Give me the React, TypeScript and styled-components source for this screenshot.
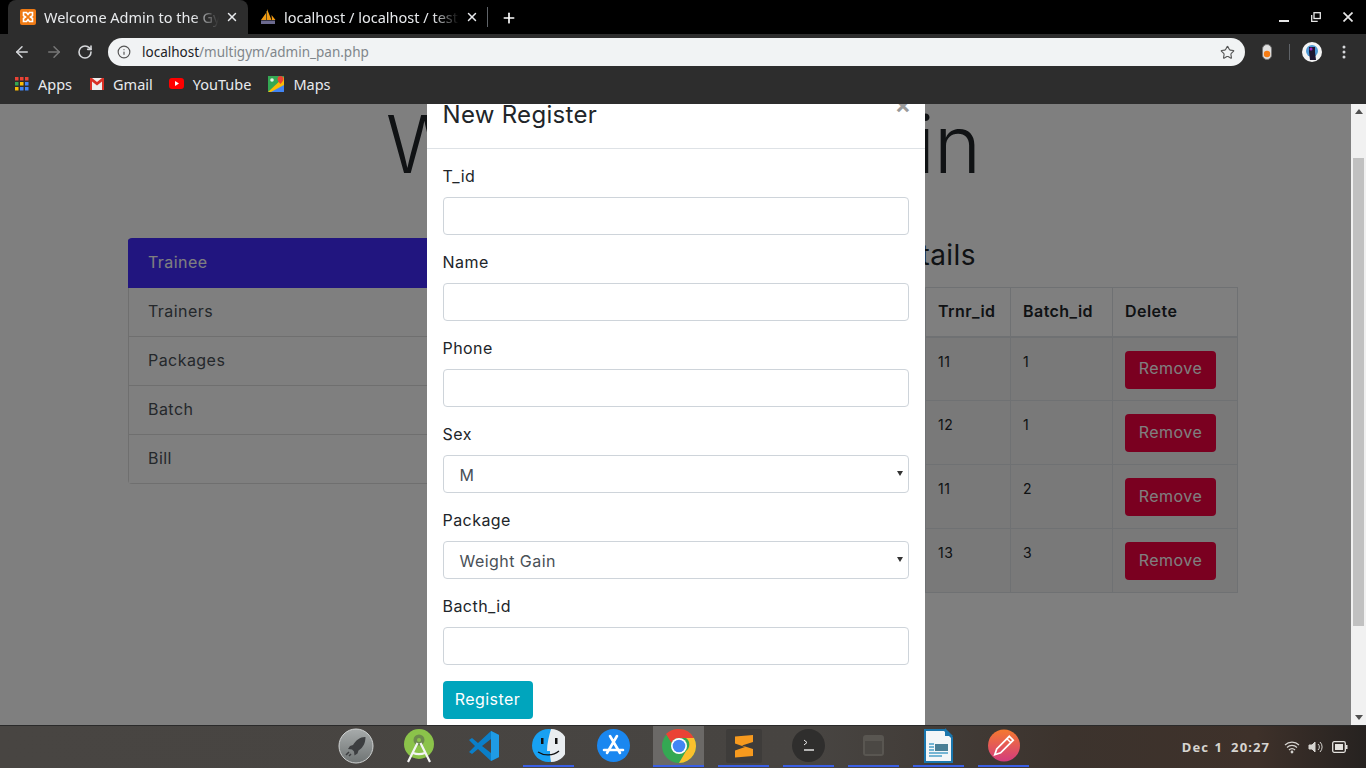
import React from "react";
import styled, { createGlobalStyle } from "styled-components";
import { ArrowLeft, ArrowRight, RotateCw, Info, Star, X, Plus } from "lucide-react";

const Global = createGlobalStyle`
  html, body { margin: 0; padding: 0; height: 100%; overflow: hidden; }
  * { box-sizing: border-box; }
`;
const BODY = `"Inter", "Noto Sans", sans-serif`;
const UI = `"Noto Sans", "Open Sans", sans-serif`;

const Screen = styled.div`display:flex;flex-direction:column;width:1366px;height:768px;overflow:hidden;background:#fff;`;
const TabBar = styled.div`display:flex;align-items:flex-end;height:34px;background:#000;padding-left:8px;flex:none;`;
const Tab = styled.div<{ $active?: boolean }>`
  display:flex;align-items:center;width:240px;height:34px;padding:0 0 0 12px;
  background:${p => p.$active ? "#2d2d2d" : "transparent"};border-radius:8px 8px 0 0;color:#e8eaed;font:14.5px ${UI};white-space:nowrap;
`;
const TabTitle = styled.span`width:175px;margin-left:8px;overflow:hidden;
  -webkit-mask-image:linear-gradient(90deg,#000 85%,transparent);mask-image:linear-gradient(90deg,#000 85%,transparent);`;
const TabClose = styled.span`display:flex;margin-left:6px;color:#e8eaed;`;
const TabDivider = styled.i`display:block;width:1px;height:20px;background:#5f6368;margin:0 0 7px -1px;`;
const NewTab = styled.span`display:flex;margin:0 0 8px 13px;color:#fff;`;
const WinControls = styled.div`display:flex;align-items:flex-start;gap:22px;margin-left:auto;height:34px;padding:12px 13px 0 0;color:#e6e6e6;`;

const ToolBar = styled.div`display:flex;align-items:center;height:36px;background:#2d2d2d;flex:none;padding:0 0 0 13px;`;
const NavBtn = styled.span<{ $off?: boolean }>`display:flex;margin-right:14px;color:${p => p.$off ? "#777" : "#d5d7da"};`;
const Omni = styled.div`display:flex;align-items:center;width:1137px;height:28px;margin-left:1px;padding:0 10px 0 9px;border-radius:14px;background:#f1f3f4;font:13.5px ${UI};color:#80868b;`;
const Host = styled.span`color:#202124;margin-left:11px;`;
const OmniStar = styled.span`display:flex;margin-left:auto;color:#555;`;
const Ext = styled.span`display:flex;margin-left:17px;`;
const TbDivider = styled.i`display:block;width:1px;height:16px;background:#5f6368;margin-left:17px;`;
const Avatar = styled.span`display:flex;margin-left:12px;`;
const Dots = styled.span`display:flex;margin-left:20px;`;

const Bookmarks = styled.div`display:flex;align-items:center;height:34px;background:#2d2d2d;flex:none;padding:0 0 7px 15px;font:14.5px ${UI};color:#e8eaed;`;
const Bookmark = styled.span<{ $gap: number }>`display:flex;align-items:center;gap:9px;margin-right:${p => p.$gap}px;`;

const Viewport = styled.div`position:relative;flex:1;min-height:0;overflow:hidden;background:#fff;display:flex;`;
const Page = styled.main`flex:1;min-width:0;padding:0 128px;color:#212529;font-family:${BODY};letter-spacing:.45px;`;
const Title = styled.h1`margin:0;height:134px;padding-top:0;text-align:center;font:300 80px/80px ${BODY};letter-spacing:-.9px;white-space:nowrap;color:#212529;`;
const Columns = styled.div`display:flex;`;
const Side = styled.ul`list-style:none;margin:0;padding:0;width:320px;flex:none;border-radius:4px;align-self:flex-start;overflow:hidden;`;
const SideItem = styled.li<{ $active?: boolean }>`
  height:${p => p.$active ? 50 : 49}px;padding:0 19px ${p => p.$active ? 2 : 2}px;display:flex;align-items:center;font-size:16px;
  background:${p => p.$active ? "#422bff" : "transparent"};color:${p => p.$active ? "#fff" : "#495057"};
  border:1px solid ${p => p.$active ? "#422bff" : "rgba(0,0,0,.125)"};border-top:0;
`;
const Main = styled.section`flex:1;min-width:0;margin-left:30px;`;
const Heading = styled.h2`margin:0 0 15px;height:34px;font:400 28px/34px ${BODY};white-space:nowrap;text-align:right;padding-right:262px;`;
const Table = styled.table`width:100%;border-collapse:collapse;font-size:14px;table-layout:fixed;`;
const Th = styled.th<{ $w?: number }>`border:1px solid #dee2e6;border-bottom-width:2px;height:49px;padding:0 12px 2px;text-align:left;font-size:16px;font-weight:600;width:${p => p.$w ? p.$w + "px" : "auto"};`;
const Td = styled.td`border:1px solid #dee2e6;height:64px;padding:15px 12px 0;vertical-align:top;`;
const Striped = styled.tr`background:rgba(0,0,0,.05);`;
const Danger = styled.span`display:flex;align-items:center;justify-content:center;width:91px;height:38px;margin-top:-2px;padding-bottom:3px;background:#f40040;color:#fff;border-radius:4px;font-size:16px;`;

const Bar = styled.div`position:absolute;top:0;right:0;bottom:0;width:15px;background:#f1f1f1;z-index:3;display:flex;flex-direction:column;align-items:center;`;
const Arrow = styled.span`flex:none;height:15px;display:flex;align-items:center;justify-content:center;color:#505050;`;
const Thumb = styled.span`display:block;width:11px;height:468px;background:#c1c1c1;margin-top:39px;`;
const BarFill = styled.span`flex:1;`;

const Overlay = styled.div`position:absolute;inset:0 15px 0 0;background:rgba(0,0,0,.5);z-index:2;display:flex;justify-content:center;`;
const Modal = styled.div`flex:none;width:498px;height:700px;margin-top:-28px;background:#fff;color:#212529;font-family:${BODY};letter-spacing:.45px;`;
const ModalHead = styled.div`position:relative;display:flex;align-items:flex-end;height:73px;padding:0 16px 15px;border-bottom:1px solid #dee2e6;`;
const ModalTitle = styled.h5`margin:0;font:400 24px/36px ${BODY};letter-spacing:.3px;`;
const CloseX = styled.span`position:absolute;right:13px;top:17px;font:700 24px/24px ${BODY};color:#9a9a9a;`;
const Form = styled.div`padding:16px 16px 0;`;
const Field = styled.div`height:86px;`;
const Label = styled.label`display:block;height:32px;font-size:16px;line-height:22px;`;
const Input = styled.div`height:38px;border:1px solid #ced4da;border-radius:4px;background:#fff;`;
const Select = styled(Input)`position:relative;padding:2px 16px 0;display:flex;align-items:center;font-size:16px;color:#495057;`;
const Caret = styled.span`position:absolute;right:5px;top:15px;width:0;height:0;border-left:3px solid transparent;border-right:3px solid transparent;border-top:5px solid #333;`;
const Submit = styled.span`display:inline-flex;align-items:center;justify-content:center;width:90px;height:38px;padding-bottom:2px;border-radius:4px;background:#00a5bd;color:#fff;font-size:16px;`;

const Dock = styled.footer`display:flex;align-items:flex-start;height:43px;flex:none;padding-left:328px;border-top:1px solid #2a2a2a;
  background:linear-gradient(90deg,#484542 0,#474441 60%,#3c332d 78%,#3e312a 92%,#262220 100%);`;
const DockItem = styled.span<{ $on?: boolean; $active?: boolean; $shift?: number }>`display:flex;align-items:center;justify-content:center;width:51px;height:41px;margin-right:14px;flex:none;
  padding-left:${p => p.$shift || 0}px;
  background:${p => p.$active ? "#6b6967" : "transparent"};
  border-bottom:2px solid ${p => p.$on ? "#3a5fe5" : "transparent"};
`;
const Clock = styled.div`display:flex;gap:8px;align-self:center;margin-left:auto;font:700 13px ${UI};color:#d6d4d0;letter-spacing:1.1px;word-spacing:1px;white-space:nowrap;`;
const Tray = styled.div`display:flex;align-items:center;align-self:center;gap:8px;margin:0 18px 0 14px;`;

const Xampp = () => (<svg width="16" height="16" viewBox="0 0 16 16"><rect width="16" height="16" rx="2" fill="#ef7a14"/><path d="M3.500 3.500h3L8 5.500l1.500-2h3v3L10.500 8l2 1.500v3h-3L8 10.500l-1.500 2h-3v-3L5.500 8l-2-1.500z" fill="none" stroke="#fff" strokeWidth="1.600"/></svg>);
const Pma = () => (<svg width="16" height="16" viewBox="0 0 16 16"><path d="M1 11 6 4v7zM7 11V0l4.500 11zM12 11l-.5-5 4 5z" fill="#f29b12"/><path d="M6.500 2v9" stroke="#5b4a1e"/><rect x="1" y="11.500" width="14" height="3.500" fill="#6c6a8f"/></svg>);
const Apps = () => (<svg width="14" height="14" viewBox="0 0 14 14">{[0,5,10].flatMap(y=>[0,5,10].map(x=><rect key={x+"-"+y} x={x} y={y} width="3.500" height="3.500" fill={x===0?(y===0?"#ea4335":y===5?"#34a853":"#fbbc05"):x===5?(y===0?"#ea4335":y===5?"#fbbc05":"#4285f4"):(y===0?"#ea4335":"#4285f4")}/>))}</svg>);
const Gmail = () => (<svg width="14" height="12" viewBox="0 0 14 12"><rect width="14" height="12" fill="#eee"/><path d="M0 0h2l5 4 5-4h2v12h-2V3.500L7 7.500 2 3.500V12H0z" fill="#d93025"/></svg>);
const Yt = () => (<svg width="15" height="11" viewBox="0 0 15 11"><rect width="15" height="11" rx="3" fill="#f00"/><path d="m6 3 4 2.500L6 8z" fill="#fff"/></svg>);
const Maps = () => (<svg width="16" height="16" viewBox="0 0 16 16"><rect width="16" height="16" fill="#34a853"/><path d="M0 16 16 1v15z" fill="#fbbc05"/><path d="M3 16 16 9v7z" fill="#4285f4"/><circle cx="4" cy="4" r="1.800" fill="#e6f4e9"/><path d="M12.500 0a3 3 0 0 1 3 3c0 2-3 5-3 5s-3-3-3-5a3 3 0 0 1 3-3z" fill="#ea4335"/></svg>);

const Rocket = () => (<svg width="36" height="36" viewBox="0 0 36 36"><defs><linearGradient id="rk" x1="0" y1="0" x2="0" y2="1"><stop offset="0" stopColor="#a7abab"/><stop offset="1" stopColor="#6f7474"/></linearGradient></defs><circle cx="18" cy="18" r="17" fill="url(#rk)" stroke="#cfd2d2"/><path d="M27 9c-5 0-9 3-12 8l-3 1-2 3 4 .5 2 2 .5 4 3-2 1-3c5-3 7-8 7-13.500z" fill="#3c3e40"/><path d="M11 24l-3 3M13 26l-2 2" stroke="#3c3e40" strokeWidth="1.500"/></svg>);
const Android = () => (<svg width="30" height="34" viewBox="0 0 30 34"><circle cx="15" cy="15" r="15" fill="#8bc34a"/><circle cx="15" cy="11" r="5.500" fill="#6d8a4d"/><circle cx="15" cy="11" r="2" fill="#8bc34a"/><path d="M13.500 14 4 33M16.500 14 26 33M9 24c4 1.500 8 1.500 12 0" stroke="#f4f4f4" strokeWidth="2.200" fill="none"/></svg>);
const VSCode = () => (<svg width="32" height="32" viewBox="0 0 32 32"><path d="M23 1 31 5v22l-8 4-13-12-6 5-3-2 6-6-6-6 3-2 6 5z" fill="#0a7fc9"/><path d="M23 1 31 5v22l-8 4z" fill="#1f9be5"/><path d="M23 9 14 16l9 7z" fill="#474441"/></svg>);
const Finder = () => (<svg width="33" height="33" viewBox="0 0 33 33"><circle cx="16.500" cy="16.500" r="16.500" fill="#18a1f2"/><path d="M19 0a16.500 16.500 0 0 1 0 33c-1-5-1-8-1-11h-3c0-8 2-15 4-22z" fill="#e9edf0"/><rect x="9" y="9" width="2.500" height="6" fill="#111"/><rect x="23" y="9" width="2.500" height="6" fill="#111"/><path d="M6 23c6 4 15 4 21-1" stroke="#111" fill="none" strokeWidth="1.300"/></svg>);
const Store = () => (<svg width="33" height="33" viewBox="0 0 33 33"><circle cx="16.500" cy="16.500" r="16.500" fill="#1a87f0"/><path d="M20 7 10 24M13 7l10 17M7 21h19" stroke="#fff" strokeWidth="2.600" strokeLinecap="round"/></svg>);
const Chrome = () => (<svg width="34" height="34" viewBox="0 0 34 34"><circle cx="17" cy="17" r="17" fill="#34a853"/><path d="M17 0a17 17 0 0 1 15 9H17a8 8 0 0 0-7.500 5L4 5a17 17 0 0 1 13-5z" fill="#ea4335"/><path d="M32 9a17 17 0 0 1-15 25l7-12a8 8 0 0 0 0-13z" fill="#fbc02d"/><circle cx="17" cy="17" r="8" fill="#fff"/><circle cx="17" cy="17" r="6.300" fill="#4285f4"/></svg>);
const Sublime = () => (<svg width="36" height="34" viewBox="0 0 36 34"><rect width="36" height="34" rx="2" fill="#3e3c3a"/><path d="M27 6v7l-11 3.500L27 20v7L9 28.500v-7l10-3.500-10-3.500v-7z" fill="#f79a1e"/></svg>);
const Terminal = () => (<svg width="33" height="33" viewBox="0 0 33 33"><circle cx="16.500" cy="16.500" r="16.500" fill="#2f2e2d"/><path d="m12 11 3 2.500-3 2.500" stroke="#eee" fill="none"/><path d="M12 21h10" stroke="#eee" strokeWidth="1.400"/></svg>);
const Blank = () => (<svg width="21" height="21" viewBox="0 0 21 21"><rect width="21" height="21" rx="3" fill="#595651"/><rect x="2" y="6" width="17" height="13" fill="#4b4844"/></svg>);
const Writer = () => (<svg width="29" height="35" viewBox="0 0 29 35"><path d="M0 1h21l8 8v26H0z" fill="#1a76ad"/><path d="M2 3h18l7 7v23H2z" fill="#f3f6f8"/><path d="M21 0l8 8h-8z" fill="#1a76ad"/><rect x="11" y="16" width="13" height="7" fill="#4a7f96"/><path d="M5 16h5M5 19h5M5 22h5M5 25h19M5 28h13" stroke="#4ba0c8" strokeWidth="1.300"/></svg>);
const Pencil = () => (<svg width="32" height="33" viewBox="0 0 33 33"><defs><linearGradient id="pn" x1="0" y1="0" x2="0" y2="1"><stop offset="0" stopColor="#f5792f"/><stop offset="1" stopColor="#d33b7e"/></linearGradient></defs><circle cx="16.500" cy="16.500" r="16.500" fill="url(#pn)"/><path d="M22 7l4 4L13 24l-6 2 2-6z" fill="none" stroke="#fff" strokeWidth="1.800"/><path d="M19.500 9.500l4 4" stroke="#fff" strokeWidth="1.500"/></svg>);

const rows = [["11","1"],["12","1"],["11","2"],["13","3"]];
const fields = ["T_id","Name","Phone"];
const dockIcons: [React.ReactNode, boolean, boolean, number][] = [
  [<Rocket/>,false,false,5],[<Android/>,false,false,0],[<VSCode/>,false,false,0],[<Finder/>,true,false,0],[<Store/>,false,false,0],
  [<Chrome/>,true,true,0],[<Sublime/>,true,false,0],[<Terminal/>,true,false,0],[<Blank/>,true,false,0],[<Writer/>,true,false,0],[<Pencil/>,true,false,0],
];

export default function App() {
  return (
    <Screen>
      <Global />
      <TabBar>
        <Tab $active><Xampp /><TabTitle>Welcome Admin to the Gym</TabTitle><TabClose><X size={14} strokeWidth={2.5}/></TabClose></Tab>
        <Tab><Pma /><TabTitle>localhost / localhost / test</TabTitle><TabClose><X size={14} strokeWidth={2.5}/></TabClose></Tab>
        <TabDivider />
        <NewTab><Plus size={16} strokeWidth={2.5}/></NewTab>
        <WinControls>
          <svg width="10" height="10" viewBox="0 0 10 10"><rect y="8" width="10" height="2" fill="#e6e6e6"/></svg>
          <svg width="10" height="10" viewBox="0 0 10 10" fill="none" stroke="#e6e6e6" strokeWidth="1.300"><rect x="3" y=".7" width="6.300" height="5.800"/><path d="M.7 3v6.300h6"/></svg>
          <svg width="10" height="10" viewBox="0 0 10 10" fill="none" stroke="#e6e6e6" strokeWidth="1.700"><path d="m.5.500 9 9M9.500.5l-9 9"/></svg>
        </WinControls>
      </TabBar>
      <ToolBar>
        <NavBtn><ArrowLeft size={18}/></NavBtn>
        <NavBtn $off><ArrowRight size={18}/></NavBtn>
        <NavBtn><RotateCw size={16} strokeWidth={2.4}/></NavBtn>
        <Omni>
          <Info size={14} color="#555"/>
          <Host>localhost</Host>/multigym/admin_pan.php
          <OmniStar><Star size={15} strokeWidth={1.800}/></OmniStar>
        </Omni>
        <Ext><svg width="10" height="16" viewBox="0 0 10 16"><rect x=".5" y=".5" width="9" height="15" rx="4.500" fill="#e0e0e0" stroke="#777"/><circle cx="5" cy="10" r="3.200" fill="#f57c14"/></svg></Ext>
        <TbDivider />
        <Avatar><svg width="20" height="20" viewBox="0 0 20 20"><circle cx="10" cy="10" r="10" fill="#f4f4f4"/><circle cx="10" cy="9" r="6" fill="#4f9ad6"/><path d="M7 5h6v5l1 8H8l-1-8z" fill="#1d1630"/><circle cx="9" cy="7" r="1.500" fill="#a020c0"/></svg></Avatar>
        <Dots><svg width="4" height="14" viewBox="0 0 4 14" fill="#d5d7da"><circle cx="2" cy="2" r="1.500"/><circle cx="2" cy="7" r="1.500"/><circle cx="2" cy="12" r="1.500"/></svg></Dots>
      </ToolBar>
      <Bookmarks>
        <Bookmark $gap={18}><Apps />Apps</Bookmark>
        <Bookmark $gap={16}><Gmail />Gmail</Bookmark>
        <Bookmark $gap={17}><Yt />YouTube</Bookmark>
        <Bookmark $gap={0}><Maps />Maps</Bookmark>
      </Bookmarks>
      <Viewport>
        <Page>
          <Title>Welcome Admin</Title>
          <Columns>
            <Side>
              <SideItem $active>Trainee</SideItem>
              <SideItem>Trainers</SideItem>
              <SideItem>Packages</SideItem>
              <SideItem>Batch</SideItem>
              <SideItem>Bill</SideItem>
            </Side>
            <Main>
              <Heading>Trainee Details</Heading>
              <Table>
                <thead><tr><Th /><Th $w={85}>Trnr_id</Th><Th $w={102}>Batch_id</Th><Th $w={125}>Delete</Th></tr></thead>
                <tbody>{rows.map((r,i)=>(
                  <Striped key={i}><Td /><Td>{r[0]}</Td><Td>{r[1]}</Td><Td><Danger>Remove</Danger></Td></Striped>
                ))}</tbody>
              </Table>
            </Main>
          </Columns>
        </Page>
        <Bar>
          <Arrow><svg width="8" height="5" viewBox="0 0 8 5" fill="currentColor"><path d="M4 0l4 5H0z"/></svg></Arrow>
          <Thumb />
          <BarFill />
          <Arrow><svg width="8" height="5" viewBox="0 0 8 5" fill="currentColor"><path d="M4 5l4-5H0z"/></svg></Arrow>
        </Bar>
        <Overlay>
          <Modal>
            <ModalHead><ModalTitle>New Register</ModalTitle><CloseX>×</CloseX></ModalHead>
            <Form>
              {fields.map(f=><Field key={f}><Label>{f}</Label><Input /></Field>)}
              <Field><Label>Sex</Label><Select>M<Caret/></Select></Field>
              <Field><Label>Package</Label><Select>Weight Gain<Caret/></Select></Field>
              <Field><Label>Bacth_id</Label><Input /></Field>
              <Submit>Register</Submit>
            </Form>
          </Modal>
        </Overlay>
      </Viewport>
      <Dock>
        {dockIcons.map(([ic,on,act,sh],i)=><DockItem key={i} $on={on} $active={act} $shift={sh}>{ic}</DockItem>)}
        <Clock><span>Dec 1</span><span>20:27</span></Clock>
        <Tray>
          <svg width="16" height="14" viewBox="0 0 16 14" fill="none" stroke="#d6d4d0" strokeWidth="1.200"><path d="M1 5a10 10 0 0 1 14 0M3 7.500a7 7 0 0 1 10 0M5 10a4 4 0 0 1 6 0"/><circle cx="8" cy="12" r=".8" fill="#d6d4d0"/></svg>
          <svg width="16" height="14" viewBox="0 0 16 14" fill="none" stroke="#d6d4d0"><path d="M1 5h3l3-3v10L4 9H1z" fill="#d6d4d0"/><path d="M10 4a4 4 0 0 1 0 6M12 2a7 7 0 0 1 0 10"/></svg>
          <svg width="16" height="12" viewBox="0 0 16 12"><rect x=".7" y=".7" width="12.600" height="10.600" rx="1.500" fill="none" stroke="#e4e2de" strokeWidth="1.300"/><rect x="3" y="3" width="8" height="6" fill="#e4e2de"/><rect x="14" y="4" width="1.500" height="4" fill="#e4e2de"/></svg>
        </Tray>
      </Dock>
    </Screen>
  );
}
